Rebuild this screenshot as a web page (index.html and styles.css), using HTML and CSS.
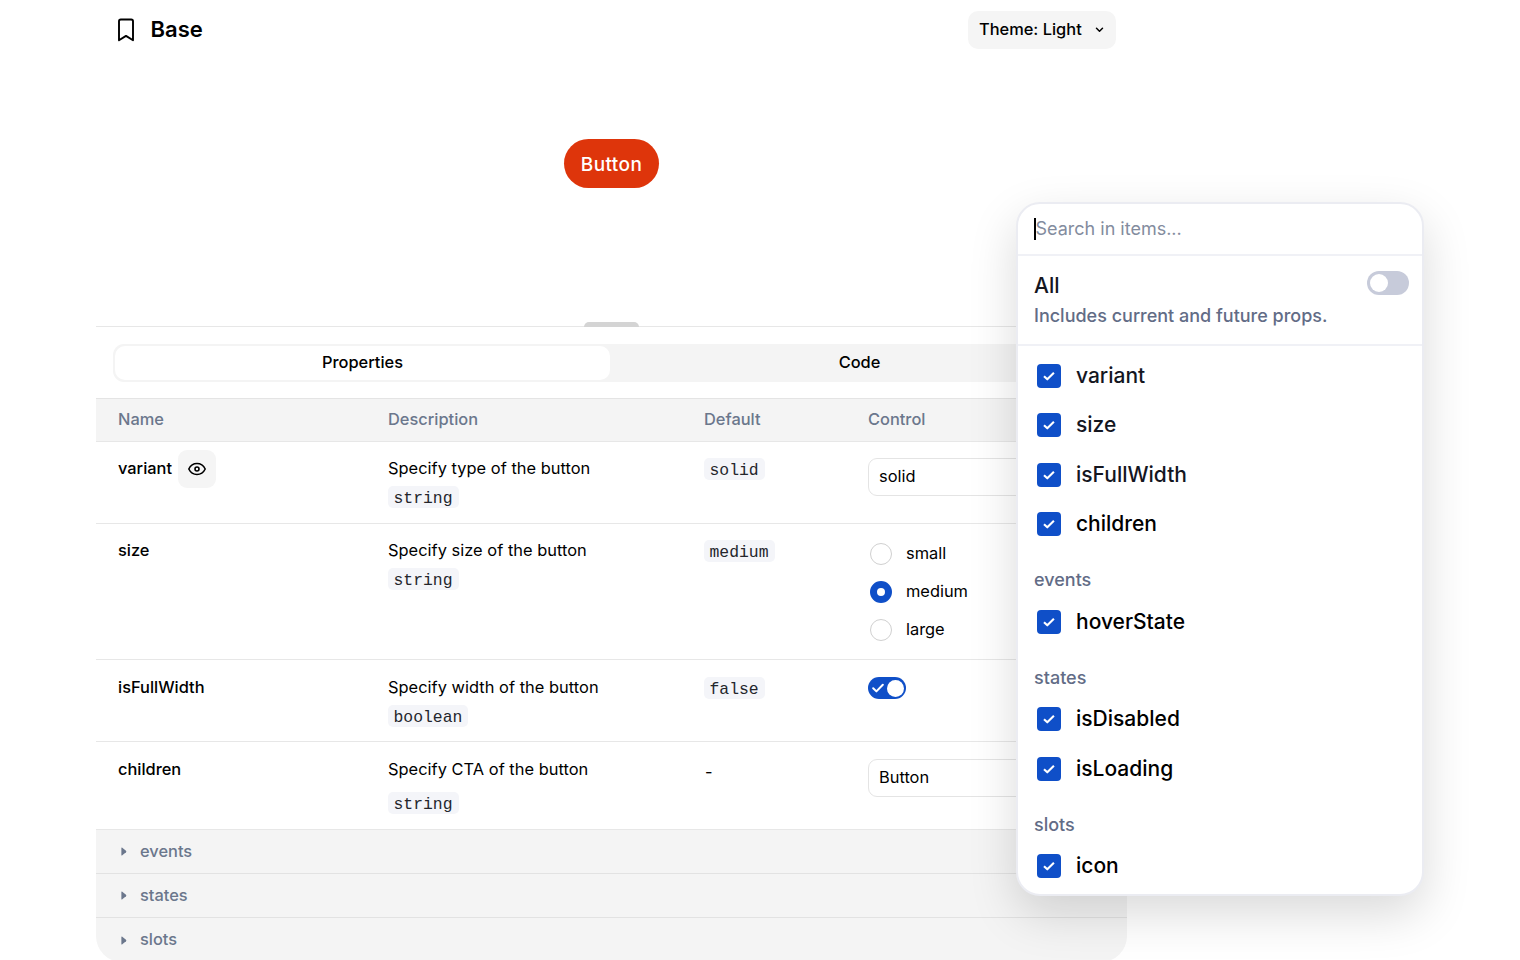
FILE: index.html
```html
<!DOCTYPE html>
<html lang="en">
<head>
    <meta charset="UTF-8">
    <title>Base - Button</title>
    <meta name="viewport" content="width=device-width, initial-scale=1.0">
    <link rel="stylesheet" href="styles.css">
</head>
<body>
    <svg class="sprite">
        <symbol id="check" viewBox="0 0 12 10">
            <path d="M1.2 5.2 4.4 8.4 10.8 1.8" fill="none" stroke="currentColor" stroke-width="2" stroke-linecap="round" stroke-linejoin="round"/>
        </symbol>
        <symbol id="check-small" viewBox="0 0 12 10">
            <path d="M1 5.2 4.3 8.3 10.9 1.8" fill="none" stroke="currentColor" stroke-width="2.1" stroke-linejoin="round"/>
        </symbol>
        <symbol id="caret" viewBox="0 0 6 9">
            <path d="M.4 1.1Q.4 0 1.3.7L5 3.8Q5.7 4.5 5 5.2L1.3 8.3Q.4 9 .4 7.9Z" fill="currentColor"/>
        </symbol>
    </svg>

    <main class="playground">
        <header class="topbar">
            <svg class="bookmark" width="20" height="26" viewBox="0 0 20 26" fill="none" stroke="#000" stroke-width="1.9" stroke-linejoin="round">
                <path d="M3 23.2V4.3Q3 2.5 4.8 2.5H15.2Q17 2.5 17 4.3V23.2L10 18.9Z"/>
            </svg>
            <h1>Base</h1>
            <button class="theme-select">
                <span>Theme: Light</span>
                <svg width="9" height="6" viewBox="0 0 9 6" fill="none" stroke="currentColor" stroke-width="1.5" stroke-linecap="round" stroke-linejoin="round"><path d="M1.5 1.3 4.5 4.2 7.5 1.3"/></svg>
            </button>
        </header>

        <section class="preview">
            <button class="demo-button">Button</button>
            <div class="resize-handle"></div>
        </section>

        <div class="tabs">
            <button class="tab active">Properties</button>
            <button class="tab">Code</button>
        </div>

        <section class="props">
            <div class="row head">
                <div>Name</div>
                <div>Description</div>
                <div>Default</div>
                <div>Control</div>
            </div>
            <div class="row row-variant">
                <div class="name"><span>variant</span>
                    <button class="eye">
                        <svg width="20" height="16" viewBox="0 0 20 16" fill="none" stroke="#000" stroke-width="1.6"><path d="M1.8 8C3.4 4.7 6.3 2.5 10 2.5S16.6 4.7 18.2 8C16.6 11.3 13.7 13.5 10 13.5S3.4 11.3 1.8 8Z" stroke-linejoin="round"/><circle cx="10" cy="8" r="2"/></svg>
                    </button>
                </div>
                <div class="desc">Specify type of the button<code>string</code></div>
                <div class="default"><code>solid</code></div>
                <div class="control"><div class="field">solid</div></div>
            </div>
            <div class="row row-size">
                <div class="name">size</div>
                <div class="desc">Specify size of the button<code>string</code></div>
                <div class="default"><code>medium</code></div>
                <div class="control radios">
                    <label><span class="radio"></span><span>small</span></label>
                    <label><span class="radio checked"></span><span>medium</span></label>
                    <label><span class="radio"></span><span>large</span></label>
                </div>
            </div>
            <div class="row row-width">
                <div class="name">isFullWidth</div>
                <div class="desc">Specify width of the button<code>boolean</code></div>
                <div class="default"><code>false</code></div>
                <div class="control"><span class="switch on"><svg width="12" height="10"><use href="#check"/></svg></span></div>
            </div>
            <div class="row row-children">
                <div class="name">children</div>
                <div class="desc">Specify CTA of the button<code>string</code></div>
                <div class="default none">-</div>
                <div class="control"><div class="field">Button</div></div>
            </div>
            <div class="group"><svg width="6" height="9"><use href="#caret"/></svg><span>events</span></div>
            <div class="group"><svg width="6" height="9"><use href="#caret"/></svg><span>states</span></div>
            <div class="group"><svg width="6" height="9"><use href="#caret"/></svg><span>slots</span></div>
        </section>
    </main>

    <aside class="popover">
        <div class="search"><span class="cursor"></span>Search in items...</div>
        <div class="all">
            <div>
                <div class="all-title">All</div>
                <div class="all-note">Includes current and future props.</div>
            </div>
            <span class="switch off"></span>
        </div>
        <div class="items">
            <label class="item ink"><span class="box"><svg width="12" height="10"><use href="#check-small"/></svg></span>variant</label>
            <label class="item ink"><span class="box"><svg width="12" height="10"><use href="#check-small"/></svg></span>size</label>
            <label class="item ink"><span class="box"><svg width="12" height="10"><use href="#check-small"/></svg></span>isFullWidth</label>
            <label class="item"><span class="box"><svg width="12" height="10"><use href="#check-small"/></svg></span>children</label>
            <div class="item-group">events</div>
            <label class="item"><span class="box"><svg width="12" height="10"><use href="#check-small"/></svg></span>hoverState</label>
            <div class="item-group">states</div>
            <label class="item"><span class="box"><svg width="12" height="10"><use href="#check-small"/></svg></span>isDisabled</label>
            <label class="item"><span class="box"><svg width="12" height="10"><use href="#check-small"/></svg></span>isLoading</label>
            <div class="item-group">slots</div>
            <label class="item"><span class="box"><svg width="12" height="10"><use href="#check-small"/></svg></span>icon</label>
        </div>
    </aside>
</body>
</html>
```
FILE: styles.css
```css
* {
    box-sizing: border-box;
}
body {
    margin: 0;
    height: 960px;
    overflow: hidden;
    position: relative;
    background: #fff;
    color: #000;
    font-family: Inter, Arial, sans-serif;
    font-size: 16.4px;
    line-height: 22px;
}
button {
    border: none;
    padding: 0;
    color: inherit;
    font: inherit;
}
.sprite {
    display: none;
}
.playground {
    width: 1031px;
    margin-left: 96px;
}

/* top bar */
.topbar {
    height: 60px;
    padding: 0 11px 0 20px;
    display: flex;
    align-items: center;
}
h1 {
    margin: 0 auto 0 14.5px;
    padding-bottom: 2px;
    font-size: 22px;
    font-weight: 600;
}
.theme-select {
    width: 148px;
    height: 38px;
    padding: 0 12px 0 11px;
    border-radius: 10px;
    background: #f5f5f5;
    font-weight: 500;
    display: flex;
    align-items: center;
    justify-content: space-between;
}
.theme-select span {
    padding-bottom: 2px;
}

/* component preview */
.preview {
    position: relative;
    height: 267px;
    padding-top: 79px;
    border-bottom: 1px solid #e7e7e7;
    text-align: center;
}
.demo-button {
    width: 95px;
    height: 49px;
    padding-top: 2px;
    border-radius: 25px;
    background: #de350b;
    color: #fff;
    font-size: 19px;
    font-weight: 500;
    letter-spacing: 0.4px;
}
.resize-handle {
    position: absolute;
    left: 488px;
    bottom: -1px;
    width: 55px;
    height: 5px;
    border-radius: 5px 5px 0 0;
    background: #d4d4d4;
}

/* tabs */
.tabs {
    height: 38px;
    margin: 17px 18px 16px 17px;
    padding: 2px;
    display: flex;
    border-radius: 11px;
    background: #f4f4f4;
}
.tab {
    flex: 1;
    padding-bottom: 2px;
    border-radius: 10px;
    background: none;
    font-weight: 500;
}
.tab.active {
    background: #fff;
}
.tab:last-child {
    padding-left: 2px;
}

/* props table */
.props {
    border-top: 1px solid #e4e4e4;
    border-radius: 0 0 26px 26px;
    overflow: hidden;
}
.row {
    display: grid;
    grid-template-columns: 270px 316px 164px 1fr;
    padding-left: 22px;
    border-bottom: 1px solid #e7e7e7;
}
.row.head {
    height: 43px;
    padding-bottom: 2px;
    align-items: center;
    background: #f4f4f4;
    color: #6b778c;
    font-weight: 500;
}
.row-variant {
    height: 82px;
}
.row-size {
    height: 136px;
}
.row-width {
    height: 82px;
    padding-top: 1px;
}
.row-children {
    height: 88px;
    padding-top: 1px;
}
.name {
    padding-top: 15px;
    font-weight: 500;
}
.row-variant .name {
    padding-top: 8px;
    display: flex;
    align-items: center;
    align-self: start;
    gap: 6px;
}
.row-variant .name span {
    padding-bottom: 2px;
}
.eye {
    width: 38px;
    height: 38px;
    border-radius: 9px;
    background: #f5f5f5;
    display: flex;
    align-items: center;
    justify-content: center;
}
.desc {
    padding-top: 15px;
    display: flex;
    flex-direction: column;
    align-items: flex-start;
    gap: 7px;
    letter-spacing: 0.03px;
}
.row-children .desc {
    gap: 12px;
}
code {
    height: 22px;
    padding: 2px 6px 0 5.5px;
    border-radius: 5px;
    background: #f4f5f9;
    color: #24262c;
    font-family: "Liberation Mono", monospace;
    font-size: 16.4px;
    line-height: 22px;
    letter-spacing: 0;
}
.default {
    padding-top: 16px;
}
.default code {
    display: inline-block;
}
.default.none {
    padding: 18px 0 0 1px;
}
.control {
    padding-top: 16px;
}
.field {
    width: 228px;
    height: 38px;
    padding: 0 10px;
    border: 1px solid #e4e4e4;
    border-radius: 9px;
    line-height: 35px;
}
.radios {
    padding: 11px 0 0 2px;
}
.radios label {
    height: 38.2px;
    display: flex;
    align-items: center;
    gap: 14px;
}
.radios label span:last-child {
    padding-bottom: 2px;
}
.radio {
    width: 22px;
    height: 22px;
    border: 1px solid #d0d0d0;
    border-radius: 50%;
}
.radio.checked {
    border: 7px solid #0f4fc8;
}
.switch {
    display: flex;
    align-items: center;
    border-radius: 12px;
}
.switch::after {
    content: "";
    border-radius: 50%;
    background: #fff;
}
.switch.on {
    width: 38px;
    height: 22px;
    padding-left: 4px;
    background: #0f4fc8;
    color: #fff;
    gap: 3px;
}
.switch.on::after {
    width: 17px;
    height: 17px;
}
.group {
    height: 44px;
    padding-left: 25px;
    display: flex;
    align-items: center;
    gap: 13px;
    background: #f4f4f4;
    border-bottom: 1px solid #e2e2e2;
    color: #6b778c;
    font-weight: 500;
}
.group span {
    padding-bottom: 2px;
}
.group:last-child {
    border-bottom: none;
}

/* popover */
.popover {
    position: absolute;
    left: 1016px;
    top: 202px;
    width: 408px;
    height: 694px;
    border: 2px solid #ebecf2;
    border-radius: 24px;
    background: #fff;
    box-shadow: 0 18px 48px rgba(0, 0, 0, 0.15);
}
.search {
    height: 52px;
    padding-left: 16px;
    display: flex;
    align-items: center;
    border-bottom: 2px solid #f0f1f6;
    color: #838c9e;
    font-size: 18px;
}
.cursor {
    width: 1.5px;
    height: 22px;
    background: #000;
}
.all {
    height: 90px;
    padding: 15px 13px 0 16px;
    display: flex;
    justify-content: space-between;
    border-bottom: 2px solid #f0f1f6;
}
.all-title {
    line-height: 29px;
    font-size: 21px;
    font-weight: 500;
    color: #14161f;
}
.all-note {
    line-height: 32px;
    color: #626c86;
    font-size: 18px;
    font-weight: 500;
}
.switch.off {
    width: 42px;
    height: 24px;
    padding-left: 3px;
    background: #c7cbda;
}
.switch.off::after {
    width: 18px;
    height: 18px;
}
.items {
    padding: 5px 19px 0;
}
.item {
    height: 49.5px;
    display: flex;
    align-items: center;
    gap: 15px;
    font-size: 21px;
    font-weight: 500;
}
.item.ink {
    color: #14161f;
}
.box {
    width: 24px;
    height: 24px;
    border-radius: 4px;
    background: #0f4fc8;
    color: #fff;
    display: flex;
    align-items: center;
    justify-content: center;
}
.item-group {
    height: 48px;
    margin-left: -3px;
    padding-top: 20px;
    color: #626c86;
    font-size: 18px;
    font-weight: 500;
}
```
